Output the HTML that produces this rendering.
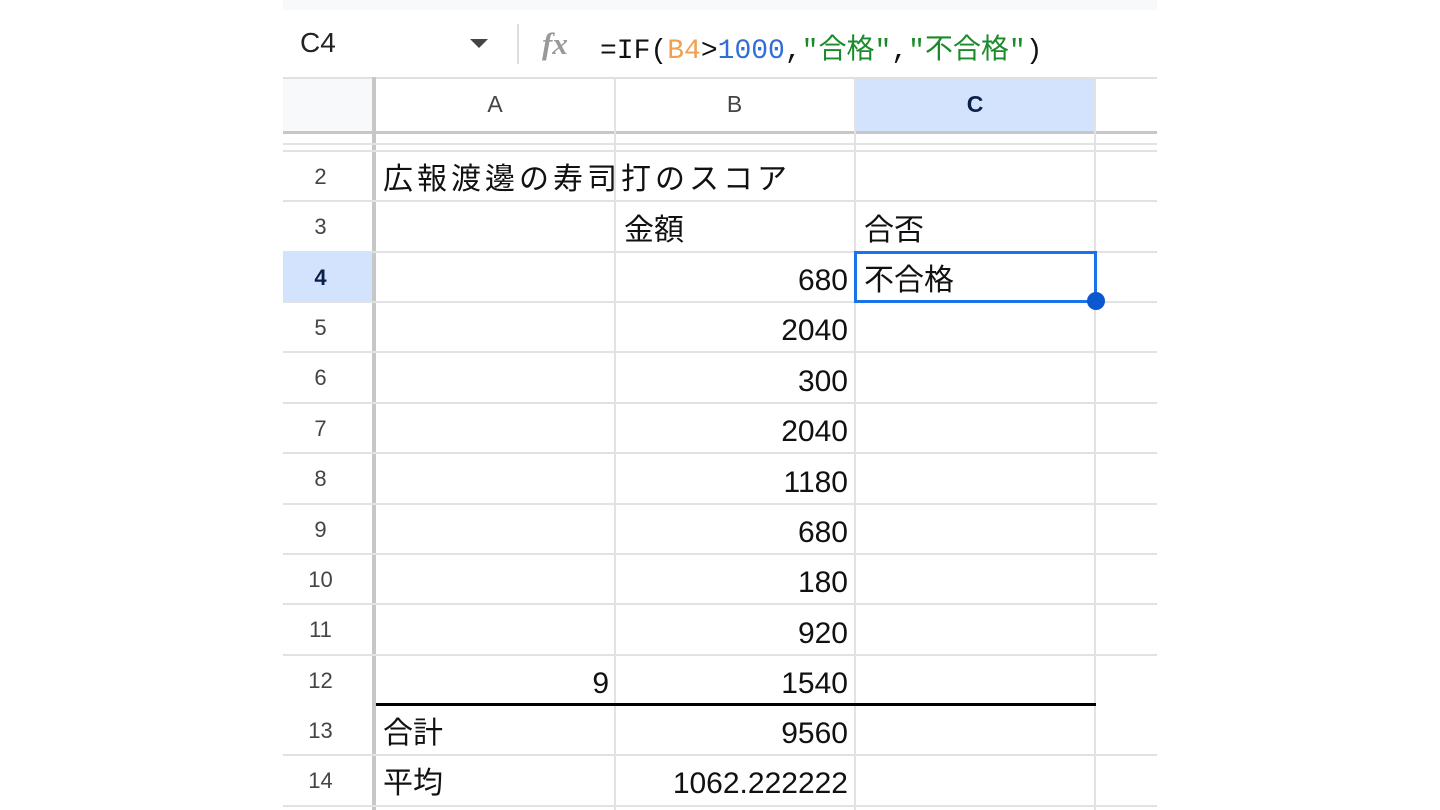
<!DOCTYPE html>
<html><head><meta charset="utf-8"><style>
body{margin:0;width:1440px;height:810px;background:#fff;position:relative;overflow:hidden;font-family:"Liberation Sans","Noto Sans CJK JP",sans-serif}
.a{position:absolute}
.h{position:absolute;left:283px;width:874px;height:2px;background:#e2e2e2}
.v{position:absolute;top:77px;height:733px;width:2px;background:#e2e2e2}
.rn{position:absolute;left:283px;width:75px;text-align:center;font-size:22px;color:#444;line-height:50px}
.t{position:absolute;font-size:30px;color:#111;line-height:50px;white-space:nowrap}
.r{text-align:right}
</style></head><body>
<div class="a" style="left:283px;top:0;width:874px;height:10px;background:#f8f9fa"></div>
<div class="a" style="left:300px;top:27px;font-size:28px;color:#222">C4</div>
<div class="a" style="left:470px;top:39px;width:0;height:0;border-left:9px solid transparent;border-right:9px solid transparent;border-top:9px solid #444"></div>
<div class="a" style="left:517px;top:24px;width:2px;height:40px;background:#ddd"></div>
<div class="a" style="left:542px;top:26px;font-size:31px;font-style:italic;font-weight:bold;color:#999;font-family:'Liberation Serif',serif">fx</div>
<div class="a" style="left:600px;top:27px;font-size:28px;font-family:'Liberation Mono','Noto Sans CJK JP',monospace;color:#111;white-space:nowrap">=IF(<span style="color:#f0a050">B4</span>&gt;<span style="color:#2f6fd6">1000</span>,<span style="color:#1a8a2a">"合格"</span>,<span style="color:#1a8a2a">"不合格"</span>)</div>
<div class="a" style="left:283px;top:77px;width:874px;height:2px;background:#e0e0e0"></div>
<div class="a" style="left:283px;top:79px;width:90px;height:52px;background:#f8f9fa"></div>
<div class="a" style="left:855px;top:79px;width:240px;height:54px;background:#d3e3fd"></div>
<div class="a" style="left:283px;top:131px;width:874px;height:3px;background:#c7c7c7"></div>
<div class="a" style="left:372px;top:77px;width:4px;height:733px;background:#c7c7c7"></div>
<div class="a" style="left:376px;top:88px;width:238px;text-align:center;font-size:23px;color:#444;line-height:32px">A</div>
<div class="a" style="left:615px;top:88px;width:239px;text-align:center;font-size:23px;color:#444;line-height:32px">B</div>
<div class="a" style="left:855px;top:88px;width:240px;text-align:center;font-size:23px;color:#0b1f4a;font-weight:bold;line-height:32px">C</div>
<div class="v" style="left:614px"></div><div class="v" style="left:854px"></div><div class="v" style="left:1094px"></div>
<div class="h" style="top:143px"></div><div class="h" style="top:150px"></div>
<div class="h" style="top:200px"></div><div class="h" style="top:251px"></div><div class="h" style="top:301px"></div><div class="h" style="top:351px"></div><div class="h" style="top:402px"></div><div class="h" style="top:452px"></div><div class="h" style="top:503px"></div><div class="h" style="top:553px"></div><div class="h" style="top:603px"></div><div class="h" style="top:654px"></div><div class="h" style="top:754px"></div><div class="h" style="top:805px"></div>
<div class="a" style="left:376px;top:703px;width:720px;height:3px;background:#000"></div>
<div class="a" style="left:283px;top:252px;width:89px;height:49px;background:#d3e3fd"></div>
<div class="rn" style="top:152px">2</div><div class="rn" style="top:202px">3</div><div class="rn" style="top:253px;font-weight:bold;color:#0b1f4a">4</div><div class="rn" style="top:303px">5</div><div class="rn" style="top:353px">6</div><div class="rn" style="top:404px">7</div><div class="rn" style="top:454px">8</div><div class="rn" style="top:505px">9</div><div class="rn" style="top:555px">10</div><div class="rn" style="top:605px">11</div><div class="rn" style="top:656px">12</div><div class="rn" style="top:706px">13</div><div class="rn" style="top:756px">14</div>
<div class="t" style="left:383px;top:155px;letter-spacing:4px">広報渡邊の寿司打のスコア</div>
<div class="t" style="left:624px;top:206px">金額</div>
<div class="t" style="left:864px;top:206px">合否</div>
<div class="t r" style="left:615px;width:233px;top:256px">680</div>
<div class="t r" style="left:615px;width:233px;top:306px">2040</div>
<div class="t r" style="left:615px;width:233px;top:357px">300</div>
<div class="t r" style="left:615px;width:233px;top:407px">2040</div>
<div class="t r" style="left:615px;width:233px;top:458px">1180</div>
<div class="t r" style="left:615px;width:233px;top:508px">680</div>
<div class="t r" style="left:615px;width:233px;top:558px">180</div>
<div class="t r" style="left:615px;width:233px;top:609px">920</div>
<div class="t r" style="left:376px;width:233px;top:659px">9</div>
<div class="t r" style="left:615px;width:233px;top:659px">1540</div>
<div class="t" style="left:383px;top:709px">合計</div>
<div class="t r" style="left:615px;width:233px;top:709px">9560</div>
<div class="t" style="left:383px;top:759px">平均</div>
<div class="t r" style="left:615px;width:233px;top:759px">1062.222222</div>
<div class="t" style="left:864px;top:256px">不合格</div>
<div class="a" style="left:854px;top:251px;width:237px;height:46px;border:3px solid #1a73e8"></div>
<div class="a" style="left:1087px;top:292px;width:18px;height:18px;border-radius:50%;background:#0b57d0"></div>
</body></html>
